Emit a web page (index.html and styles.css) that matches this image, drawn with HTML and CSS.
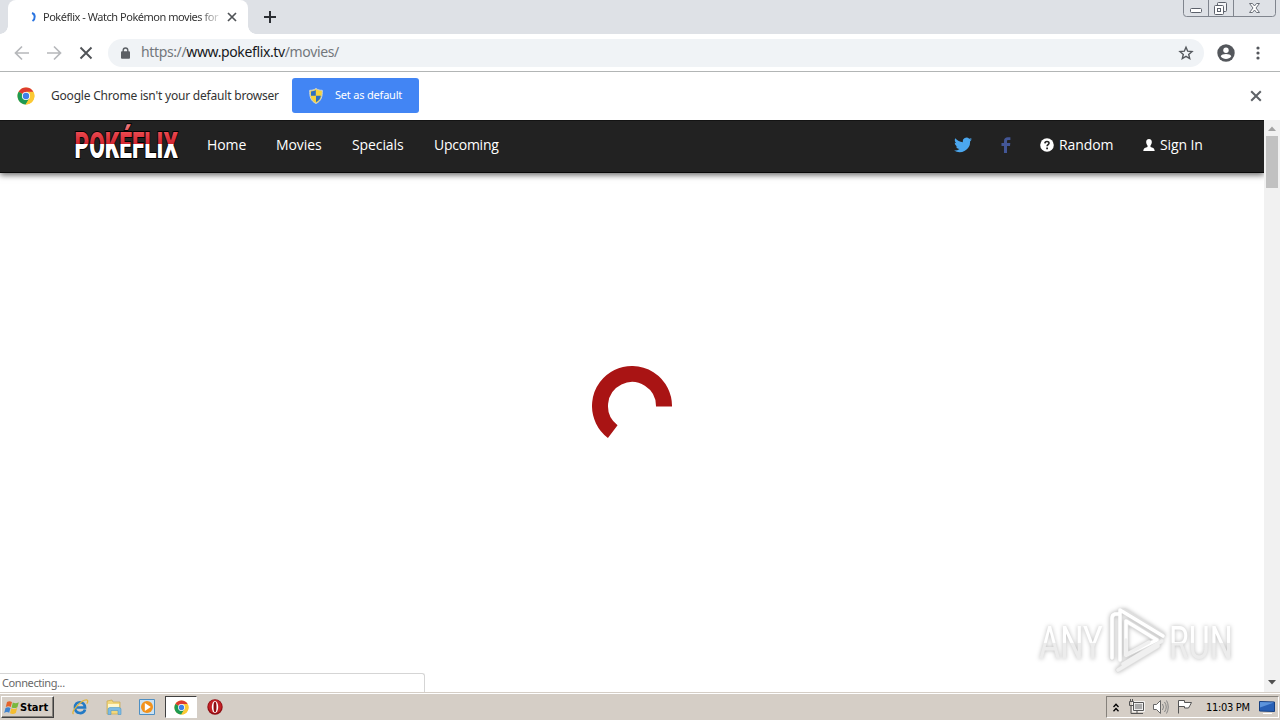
FILE: index.html
```html
<!DOCTYPE html>
<html lang="en">
<head>
    <meta charset="UTF-8">
    <title>Pokéflix - Watch Pokémon movies for free</title>
    <link rel="stylesheet" href="styles.css">
</head>
<body>

<svg class="defs" width="0" height="0">
    <symbol id="chrome" viewBox="0 0 18 18">
        <circle cx="9" cy="9" r="8.5" fill="#fbc934"/>
        <path d="M9 9L1.6 4.8A8.5 8.5 0 0 1 16.4 4.8H9z" fill="#dd3b30"/>
        <path d="M9 9L1.6 4.8A8.5 8.5 0 0 0 8.7 17.5L12.6 11z" fill="#1e9a52"/>
        <path d="M9 5h7.4A8.5 8.5 0 0 1 8.7 17.5L12.6 11z" fill="#fbc934"/>
        <circle cx="9" cy="9" r="4.1" fill="#fff"/>
        <circle cx="9" cy="9" r="3.2" fill="#3f80e8"/>
    </symbol>
    <symbol id="cross" viewBox="0 0 10 10">
        <path d="M1 1l8 8M9 1L1 9" fill="none" stroke="currentColor" stroke-width="1.7"/>
    </symbol>
</svg>

<div class="tabstrip">
    <div class="tab">
        <svg class="throbber" width="6" height="10" viewBox="0 0 6 10"><path d="M2 1C5.500 2 5.500 7 2.500 9" fill="none" stroke="#2a74e0" stroke-width="2"/></svg>
        <span class="tab-title">Pokéflix - Watch Pokémon movies for</span>
        <svg class="tab-close" width="10" height="10"><use href="#cross"/></svg>
    </div>
    <svg class="new-tab" width="12" height="12" viewBox="0 0 12 12"><path d="M6 0v12M0 6h12" stroke="#2b2e33" stroke-width="2"/></svg>
    <svg class="window-buttons" width="94" height="18" viewBox="0 0 94 18">
        <path d="M.5 0v13.5a3 3 0 0 0 3 3h86a3 3 0 0 0 3-3V0M25.500 0v16M50.500 0v16" fill="none" stroke="#80858e"/>
        <rect x="7.500" y="8.500" width="11" height="4" rx="1" fill="#fff" stroke="#5c616b"/>
        <rect x="34.500" y="2.500" width="9" height="9" rx="1" fill="#f4f5f7" stroke="#5c616b"/>
        <rect x="31.500" y="5.500" width="9" height="9" rx="1" fill="#fff" stroke="#5c616b"/>
        <rect x="34.500" y="8.500" width="3" height="3" fill="none" stroke="#5c616b"/>
        <path d="M66.500 3.500h3l2 2.500 2-2.500h3l-3.500 4.500 3.500 4.500h-3l-2-2.500-2 2.500h-3l3.500-4.500z" fill="#fff" stroke="#6b7079"/>
    </svg>
</div>

<div class="toolbar">
    <svg class="nav-icons" width="80" height="16" viewBox="0 0 80 16" fill="none" stroke="#b6b8bb" stroke-width="1.700">
        <path d="M15 8H2M8 1.500L1.500 8 8 14.500"/>
        <path d="M33 8h13M40 1.500L46.500 8 40 14.500"/>
        <path d="M66.500 2.500l11 11M77.500 2.500l-11 11" stroke="#505357" stroke-width="1.900"/>
    </svg>
    <div class="address">
        <svg width="9" height="12" viewBox="0 0 9 12"><path d="M2.200 5V3.300a2.300 2.300 0 0 1 4.600 0V5" fill="none" stroke="#5c6065" stroke-width="1.400"/><rect y="4.300" width="9" height="7.500" rx="1" fill="#5c6065"/></svg>
        <span class="url">https://<b>www.pokeflix.tv</b>/movies/</span>
        <svg class="star" width="16" height="16" viewBox="0 0 16 16"><path d="M8 2.200l1.700 4 4.300.4-3.300 2.800 1 4.200L8 11.400l-3.700 2.200 1-4.200L2 6.600l4.300-.4z" fill="none" stroke="#54585d" stroke-width="1.400"/></svg>
    </div>
    <svg class="profile" width="18" height="18" viewBox="0 0 18 18"><circle cx="9" cy="9" r="8.700" fill="#54575c"/><circle cx="9" cy="6.300" r="2.700" fill="#fff"/><path d="M3.700 12.300c1-3 9.600-3 10.600 0-2.300 3.500-8.300 3.500-10.600 0z" fill="#fff"/></svg>
    <svg class="dots" width="4" height="14" viewBox="0 0 4 14" fill="#54575c"><circle cx="2" cy="2" r="1.600"/><circle cx="2" cy="7" r="1.600"/><circle cx="2" cy="12" r="1.600"/></svg>
</div>

<div class="infobar">
    <svg width="18" height="18"><use href="#chrome"/></svg>
    <span class="infobar-text">Google Chrome isn't your default browser</span>
    <div class="default-button">
        <svg width="14" height="16" viewBox="0 0 14 16">
            <path d="M7 .5C5 2 3 2.300.700 2.300.500 8 1.500 13 7 15.500c5.500-2.500 6.500-7.500 6.300-13.200C11 2.300 9 2 7 .5z" fill="#f6d33c" stroke="#c9d3dc"/>
            <path d="M6.800 2C5 3 3.700 3.400 2 3.500v4.300h4.800zM7 7.800h4.900c-.5 3.200-2.200 5-4.900 6.400z" fill="#2d6fc0"/>
        </svg>
        <span>Set as default</span>
    </div>
    <svg class="infobar-close" width="12" height="12"><use href="#cross"/></svg>
</div>

<div class="viewport">
    <div class="page">
        <header class="navbar">
            <svg class="logo" width="108" height="38" viewBox="0 0 108 38">
                <defs>
                    <linearGradient id="logoFill" gradientUnits="userSpaceOnUse" x1="0" y1="-34" x2="0" y2="4">
                        <stop offset="0" stop-color="#f08082"/>
                        <stop offset=".25" stop-color="#e8434a"/>
                        <stop offset=".53" stop-color="#cf2530"/>
                        <stop offset=".53" stop-color="#fff"/>
                    </linearGradient>
                </defs>
                <g transform="translate(1.500 34) scale(.62 1)">
                    <text class="logo-text" textLength="167" lengthAdjust="spacingAndGlyphs">POKÉFLIX</text>
                </g>
            </svg>
            <nav class="menu">
                <a class="home">Home</a>
                <a class="movies">Movies</a>
                <a class="specials">Specials</a>
                <a class="upcoming">Upcoming</a>
            </nav>
            <div class="account">
                <svg class="twitter" width="18" height="16" viewBox="0 0 24 20"><path d="M24 2.400c-.9.400-1.800.7-2.800.8 1-.6 1.800-1.600 2.200-2.700-1 .6-2 1-3.100 1.200A4.900 4.900 0 0 0 11.900 6.200C7.800 6 4.200 4 1.700.9c-1.300 2.200-.7 5.100 1.500 6.600-.8 0-1.600-.2-2.200-.6 0 2.300 1.600 4.400 3.900 4.900-.7.200-1.500.200-2.200.1.600 2 2.400 3.400 4.600 3.400A9.900 9.900 0 0 1 0 17.300a14 14 0 0 0 21.500-12.400c1-.7 1.800-1.500 2.500-2.500z" fill="#4ba7ef"/></svg>
                <svg class="facebook" width="10" height="16" viewBox="0 0 10 16"><path d="M3 16V9H.5V6H3V4C3 1.500 4.500.3 6.800.3h2.600V3H7.500C6.300 3 6 3.500 6 4.400V6h3.300L9 9H6v7z" fill="#435696"/></svg>
                <svg width="14" height="14" viewBox="0 0 14 14"><circle cx="7" cy="7" r="6.800" fill="#fff"/><path d="M4.900 5.400C5 2.900 9.100 3 9 5.300 8.900 6.700 7.100 6.600 7.100 8.300" fill="none" stroke="#222" stroke-width="1.600"/><path d="M6.200 9.500H8v1.700H6.200z" fill="#222"/></svg>
                <a class="random">Random</a>
                <svg class="user" width="12" height="12" viewBox="0 0 12 12"><path d="M6 0c2 0 3 1.300 2.800 3.500C8.600 5 8 5.900 7.500 6.500v1.600c2 .7 4 .9 4.200 3.900H.3c.2-3 2.200-3.200 4.200-3.900V6.500C4 5.900 3.400 5 3.200 3.500 3 1.300 4 0 6 0z" fill="#fff"/></svg>
                <a class="signin">Sign In</a>
            </div>
        </header>
        <main class="loading">
            <svg width="80" height="80" viewBox="0 0 80 80"><path d="M72 40.500A32 32 0 1 0 20.740 65.560" fill="none" stroke="#a91414" stroke-width="16"/></svg>
        </main>
        <div class="status">Connecting...</div>
        <svg class="watermark" width="206" height="72" viewBox="0 0 206 72">
            <defs>
                <linearGradient id="markFill" gradientUnits="userSpaceOnUse" x1="0" y1="-54" x2="0" y2="18">
                    <stop offset=".52" stop-color="#fff"/>
                    <stop offset=".53" stop-color="#ececec"/>
                </linearGradient>
            </defs>
            <g transform="translate(7 55) scale(.7 1)"><text class="mark-text" textLength="91" lengthAdjust="spacingAndGlyphs">ANY</text></g>
            <g transform="translate(137 55) scale(.7 1)"><text class="mark-text" textLength="91" lengthAdjust="spacingAndGlyphs">RUN</text></g>
            <g fill="none" stroke-linejoin="round" stroke-linecap="round">
                <path d="M86 10h-3q-3 1-3 4v40M93 7l38 24M129 37L91 61M94 51V17l31 19zM86 66l40-24" stroke="#dedede" stroke-width="5"/>
                <path d="M80 54V14q0-3 3-4h3M88 56V6l43 26M94 17v34l31-15z" stroke="#fff" stroke-width="3.500"/>
                <path d="M94 36v15l23-13M130 37L91 60M86 66l40-24" stroke="#f0f0f0" stroke-width="3.500"/>
            </g>
        </svg>
    </div>
    <div class="scrollbar">
        <svg width="8" height="5" viewBox="0 0 8 5"><path d="M0 5l4-4.500L8 5z" fill="#a3a3a3"/></svg>
        <div class="thumb"></div>
        <svg class="down" width="8" height="5" viewBox="0 0 8 5"><path d="M0 0l4 4.500L8 0z" fill="#505050"/></svg>
    </div>
</div>

<footer class="taskbar">
    <div class="start">
        <svg width="16" height="15" viewBox="0 0 16 15">
            <path d="M3 2c2-1.200 3.500-.8 5 .1L6.800 7c-1.600-1-3.200-1-5 0z" fill="#e5632b"/>
            <path d="M8.800 2.500c2 1 3.800.9 6-.2L13.400 7.200c-2 1.200-4 1.100-5.800.2z" fill="#79b83d"/>
            <path d="M1.500 7.900c1.800-1 3.400-.9 5 0l-1.300 4.900c-1.600-1-3.200-1-5 .1z" fill="#3f83cf"/>
            <path d="M7.300 8.300c2 1 3.800.8 5.900-.2l-1.400 4.900c-2 1.200-4 1.100-5.800.2z" fill="#f4bd30"/>
        </svg>
        <b>Start</b>
    </div>
    <div class="quick">
        <svg width="18" height="18" viewBox="0 0 18 18"><path d="M14 11.500c-1 5-10 5-10-2s9.500-7 10 0H5.500" fill="none" stroke="#237ac5" stroke-width="2.700"/><path d="M2.500 16C-1 14 11 1 16 2c1.300.4.700 2.500-.3 3.700" fill="none" stroke="#e2b53b" stroke-width="1.300"/></svg>
        <svg width="18" height="18" viewBox="0 0 18 18"><path d="M2 3l5-1 1 2h7v12H2z" fill="#f2d77c" stroke="#c8a84b" stroke-width=".7"/><path d="M3 6h11v4H3z" fill="#fff7cd"/><path d="M3 16.500v-5q0-2 2-2h9q2 0 2 2v5h-3v-4H6v4z" fill="#7dbbe4" stroke="#4d98ca" stroke-width=".6"/></svg>
        <svg width="18" height="18" viewBox="0 0 18 18"><path d="M1.500 1.500h15v15h-15z" fill="#cbe2f3" stroke="#4e8fc3"/><circle cx="9" cy="9" r="6" fill="#f2921c"/><path d="M6.800 5l6 4-6 4z" fill="#fff"/></svg>
    </div>
    <div class="task-active"><svg width="15" height="15"><use href="#chrome"/></svg></div>
    <svg class="opera" width="16" height="16" viewBox="0 0 16 16"><circle cx="8" cy="8" r="7.700" fill="#8e0d12"/><circle cx="8" cy="7.500" r="6.700" fill="#c32126"/><ellipse cx="8" cy="8" rx="3.200" ry="6" fill="#fff"/><ellipse cx="8" cy="8" rx="1.500" ry="5.300" fill="#8e0d12"/></svg>
    <div class="tray">
        <svg class="chevrons" width="6" height="9" viewBox="0 0 6 9"><path d="M.5 4L3 1.200 5.500 4M.5 8.300L3 5.500l2.500 2.800" fill="none" stroke="#000" stroke-width="1.300"/></svg>
        <svg width="17" height="16" viewBox="0 0 17 16"><path d="M5.500 3.500h10v8h-10z" fill="#aaa" stroke="#fff" stroke-width="2.500"/><path d="M5.500 3.500h10v8h-10zM9 12v2.500M6 14.500h9M3 6v8.500h4M1.500 2.500h4v4h-4zM2.500 0v2M4.500 0v2" fill="none" stroke="#555"/></svg>
        <svg width="17" height="16" viewBox="0 0 17 16"><path d="M1.500 5.500h3l4-4v13l-4-4h-3z" fill="#fff" stroke="#666"/><path d="M10.500 5q2 3 0 6M12.500 3q3.500 5 0 10M14.500 1.500q3.500 6.500 0 13" fill="none" stroke="#858585"/></svg>
        <svg width="17" height="16" viewBox="0 0 17 16"><path d="M2.500 1.500v13M2.500 1.500h6v2h7q-1.500 3-3 5.500h-4V7.500h-6" fill="#fff" stroke="#555"/></svg>
        <span class="clock">11:03 PM</span>
        <svg class="desktop" width="16" height="14" viewBox="0 0 16 14"><path d="M.5 1.500l15 .5V11.500L.5 11z" fill="#2860b6" stroke="#163f80"/><path d="M1 2l14 .5-14 5z" fill="#5c94dc"/><path d="M4 13.500h9" stroke="#fff"/></svg>
    </div>
</footer>

</body>
</html>
```

FILE: styles.css
```css
body {
    width: 1280px;
    height: 720px;
    margin: 0;
    overflow: hidden;
    display: flex;
    flex-direction: column;
    background: #fff;
    font-family: "Noto Sans", sans-serif;
    color: #333;
}

svg {
    display: block;
    flex-shrink: 0;
}

.defs {
    position: absolute;
}

span, a, b {
    white-space: nowrap;
}

/* browser chrome */
.tabstrip {
    height: 34px;
    padding-left: 8px;
    display: flex;
    background: #dee1e6;
}

.tab {
    position: relative;
    width: 240px;
    box-sizing: border-box;
    padding-left: 22px;
    display: flex;
    align-items: center;
    background: #fff;
    border-radius: 8px 8px 0 0;
}

.tab::before, .tab::after {
    content: "";
    position: absolute;
    bottom: 0;
    width: 8px;
    height: 8px;
}

.tab::before {
    left: -8px;
    background: radial-gradient(circle at 0 0, #dee1e6 7.5px, #fff 8px);
}

.tab::after {
    right: -8px;
    background: radial-gradient(circle at 100% 0, #dee1e6 7.5px, #fff 8px);
}

.tab-title {
    width: 176px;
    margin-left: 7px;
    margin-top: -1px;
    font-size: 11px;
    letter-spacing: -0.47px;
    -webkit-mask-image: linear-gradient(to right, #000 155px, transparent 180px);
}

.tab-close {
    margin-left: 8px;
    color: #505357;
}

.new-tab {
    margin: 11px 0 0 16px;
}

.window-buttons {
    margin-left: auto;
    margin-right: 3px;
}

.toolbar {
    height: 37px;
    display: flex;
    align-items: center;
    border-bottom: 1px solid #b2b5b5;
}

.nav-icons {
    margin-left: 14px;
}

.address {
    width: 1096px;
    height: 28px;
    margin-left: 14px;
    padding: 0 10px 0 13px;
    box-sizing: border-box;
    display: flex;
    align-items: center;
    background: #f0f3f6;
    border-radius: 14px;
}

.url {
    margin-left: 11px;
    margin-top: -2px;
    font-size: 14px;
    letter-spacing: -0.37px;
    color: #73777c;
}

.url b {
    font-weight: normal;
    color: #16181b;
}

.star {
    margin-left: auto;
}

.profile {
    margin-left: 13px;
}

.dots {
    margin-left: 21px;
}

.infobar {
    height: 48px;
    padding-left: 17px;
    display: flex;
    align-items: center;
}

.infobar-text {
    width: 228px;
    margin-left: 16px;
    margin-top: -2px;
    font-size: 12px;
    letter-spacing: -0.2px;
}

.default-button {
    width: 127px;
    height: 35px;
    margin-left: 13px;
    margin-top: -1px;
    padding-left: 17px;
    box-sizing: border-box;
    display: flex;
    align-items: center;
    gap: 12px;
    background: #4285f4;
    border-radius: 3px;
    color: #fff;
    font-size: 11px;
    letter-spacing: -0.2px;
}

.default-button span {
    margin-top: -2px;
}

.infobar-close {
    margin-left: auto;
    margin-right: 18px;
    color: #5f6368;
}

/* web page */
.viewport {
    height: 572px;
    display: flex;
}

.page {
    position: relative;
    width: 1264px;
    overflow: hidden;
    display: flex;
    flex-direction: column;
}

.navbar {
    height: 53px;
    box-sizing: border-box;
    padding: 0 62px 0 73px;
    display: flex;
    align-items: center;
    background: #222;
    border-top: 1px solid #141414;
    border-bottom: 1px solid #080808;
    box-shadow: 0 2px 6px rgba(0, 0, 0, 0.6);
    color: #fff;
    font-family: "Open Sans", sans-serif;
    font-size: 14px;
    letter-spacing: -0.1px;
}

.logo {
    margin-top: -8px;
    overflow: visible;
}

.logo-text {
    font: 900 36px "Roboto", sans-serif;
    letter-spacing: 0;
    fill: url(#logoFill);
    stroke: #000;
    stroke-width: 2px;
    paint-order: stroke;
}

.menu {
    margin-left: 26px;
    display: flex;
    gap: 30px;
}

.menu, .account {
    margin-top: -3px;
}

.menu a, .account a {
    margin-top: -2px;
}

.home {
    width: 39px;
}

.movies {
    width: 46px;
}

.specials {
    width: 52px;
}

.upcoming {
    letter-spacing: -0.25px;
}

.account {
    margin-left: auto;
    display: flex;
    align-items: center;
}

.facebook {
    margin: 0 29px;
}

.random {
    width: 53px;
    margin-left: 5px;
}

.user {
    margin-left: 31px;
}

.signin {
    width: 42px;
    margin-left: 5px;
}

.loading {
    padding: 193px 0 0 592px;
}

.status {
    position: absolute;
    left: -1px;
    bottom: 0;
    width: 422px;
    height: 18px;
    padding-left: 2px;
    border: 1px solid #d5d5d5;
    border-bottom: 0;
    border-radius: 0 3px 0 0;
    background: #fff;
    color: #686868;
    font-size: 11px;
    letter-spacing: -0.4px;
    line-height: 18px;
}

.watermark {
    position: absolute;
    left: 1032px;
    top: 484px;
    filter: drop-shadow(0 0 2px rgba(0, 0, 0, 0.28));
}

.mark-text {
    font: 46px "Roboto", sans-serif;
    fill: url(#markFill);
}

.scrollbar {
    width: 16px;
    padding: 6px 0 7px;
    box-sizing: border-box;
    display: flex;
    flex-direction: column;
    align-items: center;
    background: #f1f1f1;
}

.thumb {
    width: 12px;
    height: 52px;
    margin-top: 5px;
    background: #c1c1c1;
}

.down {
    margin-top: auto;
}

/* taskbar */
.taskbar {
    height: 28px;
    box-sizing: border-box;
    padding: 3px 1px 0 1px;
    display: flex;
    background: #d5cec6;
    border-top: 1px solid #d5cec6;
    box-shadow: inset 0 1px #fff;
    color: #000;
}

.start {
    width: 53px;
    height: 22px;
    padding-left: 2px;
    box-sizing: border-box;
    display: flex;
    align-items: center;
    border: 1px solid;
    border-color: #fff #404040 #404040 #fff;
    box-shadow: inset -1px -1px #85817b;
    font-family: "DejaVu Sans Condensed", sans-serif;
    font-size: 11px;
}

.quick {
    margin: 2px 0 0 17px;
    display: flex;
    gap: 15.5px;
}

.task-active {
    width: 32px;
    height: 22px;
    margin-left: 9px;
    box-sizing: border-box;
    display: flex;
    align-items: center;
    justify-content: center;
    background: #fff;
    border: 1px solid;
    border-color: #404040 #fff #fff #404040;
}

.opera {
    margin: 3px 0 0 9.500px;
}

.tray {
    width: 173px;
    height: 22px;
    margin-left: auto;
    padding-left: 6px;
    box-sizing: border-box;
    display: flex;
    align-items: center;
    gap: 7px;
    border: 1px solid;
    border-color: #85817b #fff #fff #85817b;
}

.clock {
    width: 46px;
    margin-left: 6px;
    font-family: "DejaVu Sans Condensed", sans-serif;
    font-size: 11px;
    letter-spacing: -0.3px;
}

.chevrons {
    margin-right: 2px;
}
```
